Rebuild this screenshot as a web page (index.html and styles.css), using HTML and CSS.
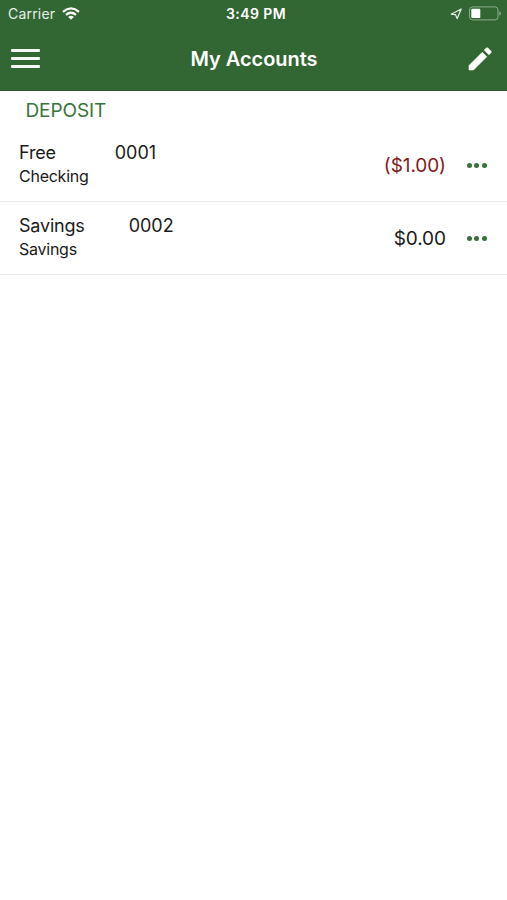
FILE: index.html
```html
<!DOCTYPE html>
<html lang="en">
<head>
<meta charset="utf-8">
<title>My Accounts</title>
<link rel="stylesheet" href="styles.css">
</head>
<body>
<header class="header">
  <div class="status">
    <div class="status-left">
      <span class="carrier">Carrier</span>
      <svg class="wifi" width="18" height="13" viewBox="0 0 18 13" fill="none" stroke="#fff" stroke-width="2.3"><path d="M1 4.8Q9-2 17 4.8M4 7.8Q9 3.6 14 7.8"/><path d="M6.2 9.9Q9 7.8 11.8 9.9L9 12.7Z" fill="#fff" stroke="none"/></svg>
    </div>
    <span class="time">3:49 PM</span>
    <div class="status-right">
      <svg width="13" height="12" viewBox="0 0 13 12" fill="none" stroke="#e5efe4" stroke-width="1.2" stroke-linejoin="round"><path d="M11.2 1 1.2 6.2 5.4 6.6 7.2 10.6Z"/></svg>
      <svg width="33" height="15" viewBox="0 0 33 15"><rect x=".5" y=".9" width="28.5" height="13" rx="3" fill="none" stroke="#8dab8b"/><rect x="2.3" y="2.8" width="9" height="9.2" rx="1" fill="#fff"/><path d="M30.3 5.2v4.4q1.7-.7 1.7-2.2t-1.7-2.2Z" fill="#8dab8b"/></svg>
    </div>
  </div>
  <div class="navbar">
    <button class="icon-button menu" aria-label="Menu"><span></span><span></span><span></span></button>
    <h1 class="title">My Accounts</h1>
    <button class="icon-button edit" aria-label="Edit"><svg width="30" height="30" viewBox="0 0 24 24" fill="#fff" stroke="#fff" stroke-width=".5" stroke-linejoin="round"><path d="M3.2 17.25V20.8h3.55L17.4 10.15l-3.55-3.55L3.2 17.25zM20.71 7.04a1 1 0 0 0 0-1.41l-2.34-2.34a1 1 0 0 0-1.41 0l-1.6 1.6 3.75 3.75 1.6-1.6z"/></svg></button>
  </div>
</header>
<main>
  <h2 class="section">DEPOSIT</h2>
  <ul class="accounts">
    <li class="account">
      <div class="info">
        <div class="line"><span class="name free">Free</span><span class="number">0001</span></div>
        <div class="type">Checking</div>
      </div>
      <span class="amount negative">($1.00)</span>
      <button class="icon-button more" aria-label="More"><i></i><i></i><i></i></button>
    </li>
    <li class="account">
      <div class="info">
        <div class="line"><span class="name">Savings</span><span class="number">0002</span></div>
        <div class="type">Savings</div>
      </div>
      <span class="amount">$0.00</span>
      <button class="icon-button more" aria-label="More"><i></i><i></i><i></i></button>
    </li>
  </ul>
</main>
</body>
</html>
```
FILE: styles.css
```css
* { box-sizing: border-box; }
body {
  margin: 0;
  min-height: 900px;
  background: #fff;
  color: #1a1a1a;
  font-family: Inter, "Liberation Sans", sans-serif;
}
.header {
  height: 91px;
  background: #326633;
  color: #fff;
  border-bottom: 1px solid #2c5c2e;
}
.status {
  display: grid;
  grid-template-columns: 1fr auto 1fr;
  align-items: center;
  height: 27px;
  padding: 0 5px 0 8px;
}
.status-left, .status-right { display: flex; align-items: center; }
.status-left { gap: 6.5px; }
.status-right { justify-content: flex-end; gap: 6px; }
.carrier { font-size: 14px; letter-spacing: .2px; color: #e9f1e8; }
.time { padding-left: 2px; font-size: 14px; font-weight: 600; letter-spacing: .4px; }
.navbar {
  display: grid;
  grid-template-columns: 1fr auto 1fr;
  align-items: center;
  height: 63px;
  padding: 0 12px 0 11px;
}
.icon-button { padding: 0; border: 0; background: none; display: flex; }
.menu { width: 29px; flex-direction: column; gap: 5px; }
.menu span { width: 29px; height: 3px; border-radius: 1px; background: #f4f8f3; }
.title { margin: 0; padding-left: 2px; font-size: 20px; line-height: 24px; font-weight: 600; letter-spacing: -.05px; }
.edit { justify-self: end; }
.section {
  margin: 0;
  padding: 8px 0 0 25.5px;
  height: 38px;
  font-size: 19px;
  line-height: 24px;
  font-weight: 400;
  letter-spacing: -.1px;
  color: #39743b;
}
.accounts { margin: 0; padding: 0; list-style: none; }
.account {
  display: flex;
  align-items: center;
  height: 73px;
  padding: 0 20.5px 0 19px;
  border-bottom: 1px solid #ebebeb;
}
.info { flex: 1; margin-top: -2px; }
.line { display: flex; gap: 44px; font-size: 18px; line-height: 24px; letter-spacing: -.2px; }
.free { margin-right: 15px; }
.number { letter-spacing: 0; }
.type { font-size: 16px; line-height: 23px; letter-spacing: -.25px; }
.info .type { line-height: 22px; }
.amount { padding-top: 1px; font-size: 19px; line-height: 24px; margin-right: 21px; letter-spacing: -.1px; }
.negative { color: #82191b; }
.more { gap: 2.3px; }
.more i { width: 5px; height: 5px; border-radius: 50%; background: #39713a; }
```
